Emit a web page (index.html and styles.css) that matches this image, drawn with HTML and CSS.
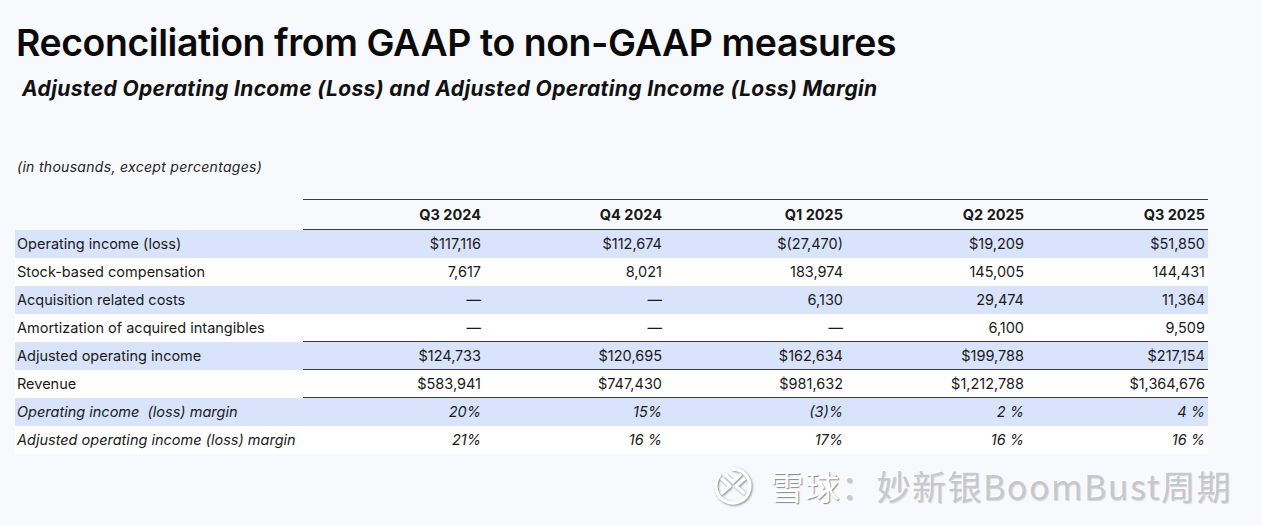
FILE: index.html
```html
<!DOCTYPE html>
<html lang="en">
<head>
<meta charset="utf-8">
<title>Reconciliation from GAAP to non-GAAP measures</title>
<link rel="stylesheet" href="styles.css">
</head>
<body>
<main class="page">
  <h1 class="title">Reconciliation from GAAP to non-GAAP measures</h1>
  <h2 class="subtitle">Adjusted Operating Income (Loss) and Adjusted Operating Income (Loss) Margin</h2>
  <p class="note">(in thousands, except percentages)</p>
  <table class="recon">
    <colgroup>
      <col class="col-label">
      <col class="col-data"><col class="col-data"><col class="col-data"><col class="col-data"><col class="col-data">
    </colgroup>
    <thead>
      <tr>
        <th class="label"></th>
        <th>Q3 2024</th>
        <th>Q4 2024</th>
        <th>Q1 2025</th>
        <th>Q2 2025</th>
        <th>Q3 2025</th>
      </tr>
    </thead>
    <tbody>
      <tr class="shade">
        <td class="label">Operating income (loss)</td>
        <td>$117,116</td><td>$112,674</td><td>$(27,470)</td><td>$19,209</td><td>$51,850</td>
      </tr>
      <tr>
        <td class="label">Stock-based compensation</td>
        <td>7,617</td><td>8,021</td><td>183,974</td><td>145,005</td><td>144,431</td>
      </tr>
      <tr class="shade">
        <td class="label">Acquisition related costs</td>
        <td>—</td><td>—</td><td>6,130</td><td>29,474</td><td>11,364</td>
      </tr>
      <tr>
        <td class="label">Amortization of acquired intangibles</td>
        <td>—</td><td>—</td><td>—</td><td>6,100</td><td>9,509</td>
      </tr>
      <tr class="shade total">
        <td class="label">Adjusted operating income</td>
        <td>$124,733</td><td>$120,695</td><td>$162,634</td><td>$199,788</td><td>$217,154</td>
      </tr>
      <tr class="revenue">
        <td class="label">Revenue</td>
        <td>$583,941</td><td>$747,430</td><td>$981,632</td><td>$1,212,788</td><td>$1,364,676</td>
      </tr>
      <tr class="shade pct">
        <td class="label">Operating income &nbsp;(loss) margin</td>
        <td>20%</td><td>15%</td><td>(3)%</td><td>2 %</td><td>4 %</td>
      </tr>
      <tr class="pct">
        <td class="label">Adjusted operating income (loss) margin</td>
        <td>21%</td><td>16 %</td><td>17%</td><td>16 %</td><td>16 %</td>
      </tr>
    </tbody>
  </table>
  <div class="watermark">
    <svg class="wm-logo" width="40" height="40" viewBox="0 0 40 40" aria-hidden="true">
      <path d="M20 3 A17 17 0 1 1 6.5 9.5" fill="none" stroke="#ffffff" stroke-width="3.4" stroke-linecap="round"/>
      <path d="M9 13 L17 20 L9 27" fill="none" stroke="#ffffff" stroke-width="3.4" stroke-linejoin="round" stroke-linecap="round"/>
      <path d="M31 13 L23 20 L31 27" fill="none" stroke="#ffffff" stroke-width="3.4" stroke-linejoin="round" stroke-linecap="round"/>
      <path d="M13 9 L20 16 L27 9" fill="none" stroke="#ffffff" stroke-width="3.4" stroke-linejoin="round" stroke-linecap="round"/>
    </svg>
    <span class="wm-brand">雪球</span><span class="wm-rest">：妙新银BoomBust周期</span>
  </div>
</main>
</body>
</html>
```
FILE: styles.css
```css
* { box-sizing: border-box; }
html, body { margin: 0; padding: 0; }
body {
  background: #f8f9fc;
  font-family: Inter, "Noto Sans", sans-serif;
  color: #111111;
  width: 1262px;
  height: 525px;
  overflow: hidden;
}
.page {
  position: relative;
  height: 525px;
  padding: 20px 0 0 15px;
}
.title {
  margin: 0 0 0 1px;
  font-size: 37.4px;
  font-weight: 600;
  line-height: 46px;
  letter-spacing: -0.4px;
  color: #0a0a0a;
}
.subtitle {
  margin: 10px 0 0 7px;
  font-size: 21px;
  font-weight: 700;
  font-style: italic;
  line-height: 26px;
  letter-spacing: 0.37px;
  color: #111;
}
.note {
  margin: 56px 0 0 2px;
  font-size: 14px;
  font-style: italic;
  line-height: 18px;
  letter-spacing: 0.3px;
  color: #222;
}
.recon {
  margin-top: 23px;
  width: 1193px;
  table-layout: fixed;
  border-collapse: collapse;
  font-size: 14.5px;
  letter-spacing: 0;
  color: #1a1a1a;
}
.col-label { width: 288px; }
.col-data { width: 181px; }
.recon th, .recon td {
  height: 28px;
  padding: 0 3px 0 0;
  text-align: right;
  white-space: nowrap;
  font-weight: 400;
}
.recon .label {
  text-align: left;
  padding-left: 2px;
}
.recon thead th {
  height: 30px;
  font-weight: 700;
  border-top: 1px solid #3a3a3a;
  border-bottom: 1px solid #3a3a3a;
}
.recon thead th.label {
  border: 0;
}
.recon tbody tr { background: #ffffff; }
.recon tbody tr.shade { background: #d9e3fb; }
.recon tr.total td:not(.label) {
  border-top: 1px solid #3a3a3a;
  border-bottom: 1px solid #3a3a3a;
}
.recon tr.revenue td:not(.label) {
  border-bottom: 1px solid #3a3a3a;
}
.recon tr.pct td { font-style: italic; }
.watermark {
  position: absolute;
  left: 713px;
  top: 466px;
  display: flex;
  align-items: center;
  font-family: "Noto Sans CJK SC", "Noto Sans", sans-serif;
  font-size: 34px;
  line-height: 40px;
  letter-spacing: 1.5px;
}
.wm-logo {
  margin-right: 17px;
  filter: drop-shadow(1px 1px 1px rgba(0,0,0,0.45));
}
.wm-brand {
  color: #ffffff;
  text-shadow: 1px 1px 1px rgba(0,0,0,0.45);
}
.wm-rest {
  color: #c7c8cd;
  text-shadow: -1px -1px 0 #ffffff, 1px 1px 1px rgba(0,0,0,0.15);
}
```
